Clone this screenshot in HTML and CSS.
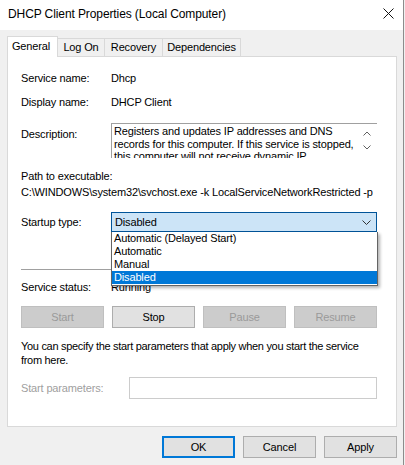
FILE: index.html
```html
<!DOCTYPE html>
<html lang="en">
<head>
  <meta charset="UTF-8">
  <title>DHCP Client Properties (Local Computer)</title>
  <link rel="stylesheet" href="styles.css">
</head>
<body>
  <div class="window">
    <div class="titlebar">
      <span class="title">DHCP Client Properties (Local Computer)</span>
      <svg class="close" width="11" height="11" viewBox="0 0 11 11"><path d="M0.5 0.5L10.5 10.5M10.5 0.5L0.5 10.5" stroke="#111" stroke-width="1"/></svg>
    </div>
    <div class="content">
      <div class="tabs">
        <div class="tab active">General</div>
        <div class="tab tab-logon">Log On</div>
        <div class="tab tab-recovery">Recovery</div>
        <div class="tab tab-deps">Dependencies</div>
      </div>
      <div class="panel">
        <div class="row row-name"><span class="label">Service name:</span><span>Dhcp</span></div>
        <div class="row row-display"><span class="label">Display name:</span><span>DHCP Client</span></div>
        <div class="row row-desc">
          <span class="label label-desc">Description:</span>
          <div class="desc-box">
            <div class="desc-text">Registers and updates IP addresses and DNS records for this computer. If this service is stopped, this computer will not receive dynamic IP addresses and DNS updates.</div>
            <div class="desc-scroll">
              <svg width="8" height="5" viewBox="0 0 8 5"><path d="M0.5 4.5L4 1L7.5 4.5" stroke="#606060" fill="none"/></svg>
              <svg width="8" height="5" viewBox="0 0 8 5"><path d="M0.5 0.5L4 4L7.5 0.5" stroke="#606060" fill="none"/></svg>
            </div>
          </div>
        </div>
        <div class="path-label">Path to executable:</div>
        <div class="path-text">C:\WINDOWS\system32\svchost.exe -k LocalServiceNetworkRestricted -p</div>
        <div class="row row-startup">
          <span class="label">Startup type:</span>
          <div class="combo-wrap">
            <div class="combo">
              <span>Disabled</span>
              <svg width="9" height="5" viewBox="0 0 9 5"><path d="M0.5 0.5L4.5 4.5L8.5 0.5" stroke="#333" fill="none"/></svg>
            </div>
            <div class="combo-list">
              <div class="combo-item">Automatic (Delayed Start)</div>
              <div class="combo-item">Automatic</div>
              <div class="combo-item">Manual</div>
              <div class="combo-item selected">Disabled</div>
            </div>
          </div>
        </div>
        <div class="separator"></div>
        <div class="row row-status"><span class="label">Service status:</span><span>Running</span></div>
        <div class="service-buttons">
          <button class="btn disabled">Start</button>
          <button class="btn">Stop</button>
          <button class="btn disabled">Pause</button>
          <button class="btn disabled">Resume</button>
        </div>
        <p class="hint">You can specify the start parameters that apply when you start the service from here.</p>
        <div class="row row-params">
          <span class="label label-params">Start parameters:</span>
          <div class="params-input"></div>
        </div>
      </div>
      <div class="footer">
        <button class="btn btn-footer btn-default">OK</button>
        <button class="btn btn-footer">Cancel</button>
        <button class="btn btn-footer">Apply</button>
      </div>
    </div>
  </div>
</body>
</html>
```

FILE: styles.css
```css
body {
  margin: 0;
  padding: 0;
  background: #f0f0f0;
  font-family: "Liberation Sans", Arial, sans-serif;
  font-size: 11px;
  letter-spacing: -0.15px;
  color: #000000;
}

.window {
  width: 404px;
  height: 465px;
  box-sizing: border-box;
  border-right: 1px solid #8c8c8c;
  background: #f0f0f0;
}

.titlebar {
  height: 30px;
  background: #ffffff;
  display: flex;
  align-items: center;
  justify-content: space-between;
  padding: 0 9px 0 8px;
}

.title {
  font-size: 12px;
  letter-spacing: -0.1px;
  margin-top: -2px;
}

.close {
  margin-top: -4px;
}

.content {
  padding: 6px 6px 0 7px;
}

.tabs {
  display: flex;
  align-items: flex-end;
  height: 20px;
}

.tab {
  box-sizing: border-box;
  height: 18px;
  line-height: 17px;
  border: 1px solid #d9d9d9;
  border-bottom: none;
  background: #f0f0f0;
  text-align: center;
  margin-left: -1px;
}

.tab.active {
  width: 51px;
  height: 21px;
  line-height: 18px;
  margin-left: 0;
  margin-bottom: -1px;
  background: #ffffff;
  position: relative;
  z-index: 1;
  padding-right: 3px;
}

.tab-logon {
  width: 48px;
}

.tab-recovery {
  width: 59px;
}

.tab-deps {
  width: 79px;
}

.panel {
  box-sizing: border-box;
  width: 390px;
  height: 371px;
  background: #ffffff;
  border: 1px solid #d9d9d9;
  padding: 15px 19px 0 13px;
}

.row {
  display: flex;
  line-height: 13px;
}

.label {
  width: 90px;
  flex-shrink: 0;
}

.row-display {
  margin-top: 11px;
}

.row-desc {
  margin-top: 14px;
}

.label-desc {
  padding-top: 5px;
}

.desc-box {
  position: relative;
  flex: 1;
  height: 35px;
  overflow: hidden;
  border-top: 1px solid #a0a0a0;
  border-left: 1px solid #a0a0a0;
  box-sizing: border-box;
}

.desc-text {
  padding: 1px 22px 0 2px;
  line-height: 12.5px;
}

.desc-scroll {
  position: absolute;
  top: 7px;
  right: 6px;
  display: flex;
  flex-direction: column;
  gap: 9px;
}

.desc-scroll svg {
  display: block;
}

.path-label {
  margin-top: 12px;
  line-height: 13px;
}

.path-text {
  margin-top: 3px;
  line-height: 13px;
  white-space: nowrap;
  overflow: hidden;
}

.row-startup {
  margin-top: 13px;
  line-height: 20px;
}

.combo-wrap {
  position: relative;
  flex: 1;
}

.combo {
  height: 20px;
  box-sizing: border-box;
  border: 1px solid #005499;
  background: #cce4f7;
  display: flex;
  align-items: center;
  justify-content: space-between;
  padding: 0 5px 0 3px;
  line-height: 18px;
}

.combo-list {
  position: absolute;
  top: 20px;
  left: 0;
  width: 267px;
  box-sizing: border-box;
  background: #ffffff;
  border: 1px solid #646464;
  border-top: none;
  box-shadow: 2px 2px 3px rgba(0, 0, 0, 0.3);
  padding-bottom: 1px;
  z-index: 2;
}

.combo-item {
  height: 13px;
  line-height: 13px;
  padding-left: 2px;
}

.combo-item.selected {
  background: #0078d7;
  color: #ffffff;
}

.separator {
  margin-top: 37px;
  height: 1px;
  background: #a0a0a0;
}

.row-status {
  margin-top: 11px;
}

.service-buttons {
  margin-top: 12px;
  display: grid;
  grid-template-columns: repeat(4, 1fr);
  gap: 8px;
}

.btn {
  height: 22px;
  box-sizing: border-box;
  border: 1px solid #adadad;
  background: #e1e1e1;
  font-family: "Liberation Sans", Arial, sans-serif;
  font-size: 11px;
  letter-spacing: -0.15px;
  color: #000000;
  padding: 0;
}

.btn.disabled {
  background: #cccccc;
  border-color: #bfbfbf;
  color: #9a9a9a;
}

.hint {
  margin: 11px 0 0 0;
  line-height: 14px;
  letter-spacing: -0.3px;
}

.row-params {
  margin-top: 10px;
  line-height: 22px;
}

.label-params {
  width: 108px;
  color: #a0a0a0;
}

.params-input {
  flex: 1;
  height: 22px;
  box-sizing: border-box;
  border: 1px solid #cccccc;
}

.footer {
  display: flex;
  justify-content: flex-end;
  gap: 8px;
  margin-top: 9px;
}

.btn-footer {
  width: 73px;
}

.btn-default {
  border: 2px solid #0078d7;
}
```
